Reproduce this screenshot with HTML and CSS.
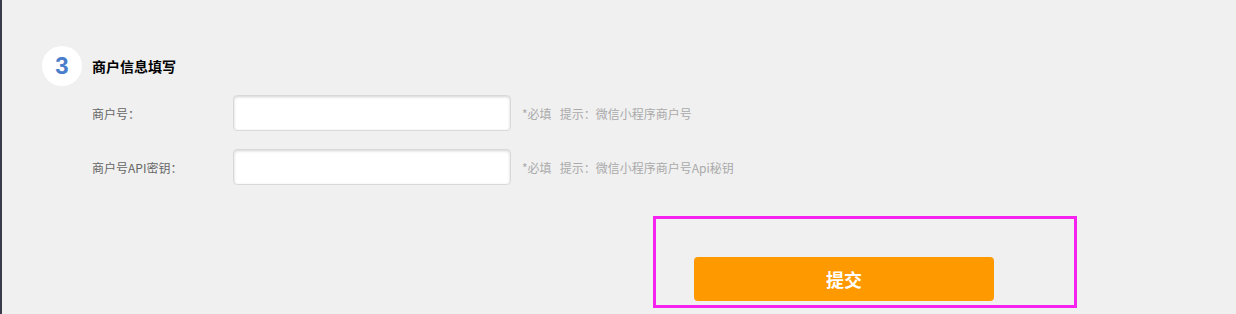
FILE: index.html
```html
<!DOCTYPE html>
<html lang="zh-CN">
<head>
    <meta charset="UTF-8">
    <meta name="viewport" content="width=device-width, initial-scale=1.0">
    <title>商户信息填写</title>
    <link rel="stylesheet" href="styles.css">
</head>
<body>
    <div class="page">
        <div class="step-head">
            <span class="step-num">3</span>
            <h2 class="step-title">商户信息填写</h2>
        </div>
        <form class="merchant-form">
            <div class="form-row">
                <label for="mchId">商户号：</label>
                <input type="text" id="mchId" name="mchId">
                <span class="hint">*必填&nbsp;&nbsp;&nbsp;提示：微信小程序商户号</span>
            </div>
            <div class="form-row">
                <label for="mchKey">商户号API密钥：</label>
                <input type="text" id="mchKey" name="mchKey">
                <span class="hint">*必填&nbsp;&nbsp;&nbsp;提示：微信小程序商户号Api秘钥</span>
            </div>
            <div class="actions">
                <button type="submit" class="submit-btn">提交</button>
            </div>
        </form>
    </div>
</body>
</html>
```

FILE: styles.css
```css
html, body {
    height: 100%;
}
body {
    margin: 0;
    background-color: #f0f0f0;
    border-left: 2px solid #393b4a;
    font-family: "Noto Sans CJK SC", "Liberation Sans", sans-serif;
    font-size: 12px;
    color: #666;
}
.page {
    padding: 46px 0 0 40px;
}
.step-head {
    display: flex;
    align-items: center;
    gap: 10px;
}
.step-num {
    width: 40px;
    height: 40px;
    border-radius: 50%;
    background-color: #fff;
    color: #4a7ecb;
    font-family: "Liberation Sans", Arial, sans-serif;
    font-weight: bold;
    font-size: 24px;
    display: flex;
    align-items: center;
    justify-content: center;
}
.step-title {
    margin: 0;
    font-size: 14px;
    font-weight: bold;
    color: #000;
}
.merchant-form {
    margin: 9px 0 0 50px;
}
.form-row {
    display: flex;
    align-items: center;
    margin-bottom: 18px;
}
.form-row label {
    width: 141px;
}
.form-row input {
    width: 278px;
    height: 36px;
    box-sizing: border-box;
    border: 1px solid #d9d9d9;
    border-radius: 4px;
    background-color: #fff;
    box-shadow: inset 0 1px 3px rgba(0, 0, 0, 0.18);
    outline: none;
}
.hint {
    margin-left: 11px;
    color: #aaa;
}
.actions {
    margin: 31px 0 0 561px;
    width: 424px;
    height: 92px;
    box-sizing: border-box;
    border: 3px solid #f522f0;
    padding: 38px 0 0 38px;
}
.submit-btn {
    display: block;
    width: 300px;
    height: 44px;
    border: none;
    border-radius: 4px;
    background-color: #ff9900;
    color: #fff;
    font-family: "Noto Sans CJK SC", sans-serif;
    font-size: 18px;
    font-weight: bold;
    cursor: pointer;
}
```
